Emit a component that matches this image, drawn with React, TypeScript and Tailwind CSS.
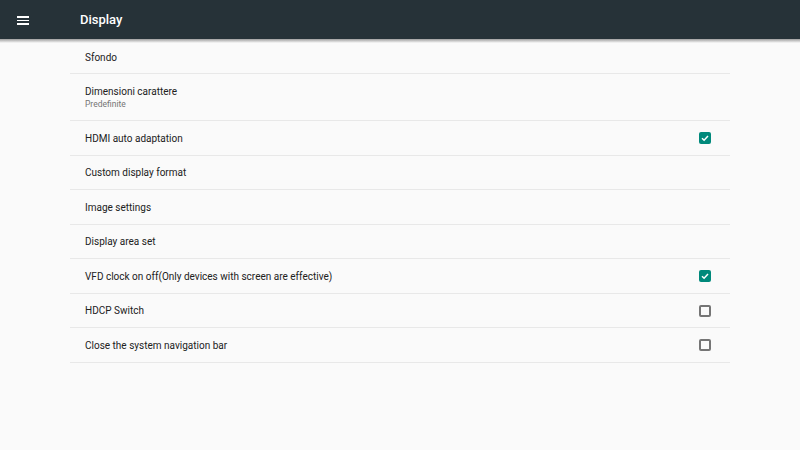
import React from "react";

const Check = ({ on }: { on: boolean }) =>
  on ? (
    <div className="w-[12px] h-[12px] rounded-[2px] bg-[#00897b] flex items-center justify-center">
      <svg width="10" height="10" viewBox="0 0 10 10">
        <path d="M2 5.2 L4.1 7.2 L8 3" stroke="white" strokeWidth="1.5" fill="none" />
      </svg>
    </div>
  ) : (
    <div className="w-[12px] h-[12px] rounded-[2px] border-2 border-[#757575]" />
  );

const rows: { t: string; s?: string; c?: boolean; h: string }[] = [
  { t: "HDMI auto adaptation", c: true, h: "h-[35px]" },
  { t: "Custom display format", h: "h-[34px]" },
  { t: "Image settings", h: "h-[35px]" },
  { t: "Display area set", h: "h-[34px]" },
  { t: "VFD clock on off(Only devices with screen are effective)", c: true, h: "h-[35px]" },
  { t: "HDCP Switch", c: false, h: "h-[34px]" },
  { t: "Close the system navigation bar", c: false, h: "h-[35px]" },
];

export default function App() {
  return (
    <div className="w-[800px] h-[450px] bg-[#fafafa] overflow-hidden" style={{ fontFamily: "Roboto, sans-serif" }}>
      <div className="relative h-[39px] bg-[#263238] flex items-center">
        <div className="ml-[17px] mt-[2px] w-[12px] flex flex-col gap-[2px]">
          <div className="h-[1.5px] bg-white" />
          <div className="h-[1.5px] bg-white" />
          <div className="h-[1.5px] bg-white" />
        </div>
        <div className="ml-[51px] text-white text-[13px] font-medium">Display</div>
        <div className="absolute left-0 right-0 top-[39px] h-[4px] bg-gradient-to-b from-[#9e9e9e] to-[#fafafa]" />
      </div>
      <div className="mx-[70px] w-[660px]">
        <div className="h-[35px] border-b border-[#e8e8e8] flex items-center pl-[15px] pt-[3px] text-[10px] text-[#212121]">Sfondo</div>
        <div className="h-[47px] border-b border-[#e8e8e8] flex flex-col justify-center pl-[15px] pt-[1px]">
          <div className="text-[10px] text-[#212121] leading-[13px]">Dimensioni carattere</div>
          <div className="text-[8.5px] text-[#757575] leading-[12px]">Predefinite</div>
        </div>
        {rows.map((r) => (
          <div key={r.t} className={`${r.h} border-b border-[#e8e8e8] flex items-center justify-between pl-[15px] pr-[19px] text-[10px] text-[#212121]`}>
            <span>{r.t}</span>
            {r.c !== undefined && <Check on={r.c} />}
          </div>
        ))}
      </div>
    </div>
  );
}
